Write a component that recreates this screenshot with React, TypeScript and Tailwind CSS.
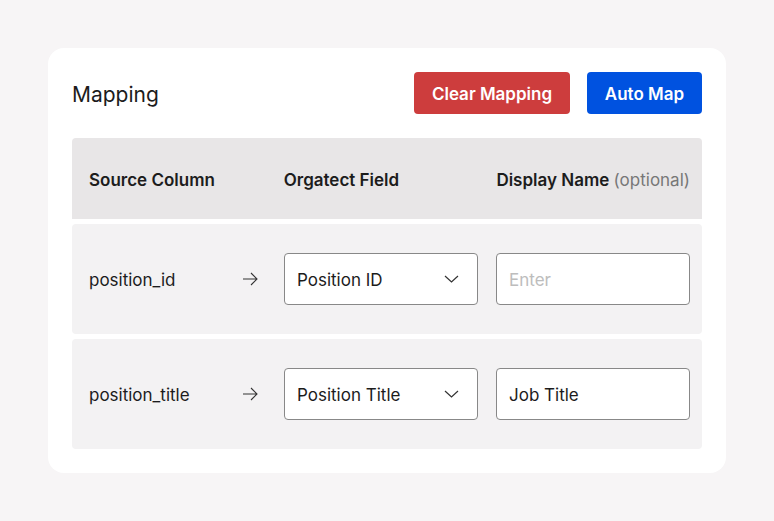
import React from "react";

const rows = [
  { source: "position_id", field: "Position ID", display: "" },
  { source: "position_title", field: "Position Title", display: "Job Title" },
];

function Arrow() {
  return (
    <svg width="16" height="14" viewBox="0 0 16 14" fill="none" stroke="#333" strokeWidth="1.1">
      <path d="M1 7h14M9 1l6 6-6 6" />
    </svg>
  );
}

function Chevron() {
  return (
    <svg width="15" height="8" viewBox="0 0 15 8" fill="none" stroke="#333" strokeWidth="1.2">
      <path d="M1 1l6.5 6L14 1" />
    </svg>
  );
}

export default function App() {
  return (
    <div
      className="min-h-[521px] w-full bg-[#f7f5f6] p-12 text-[#1c1c1c]"
      style={{ fontFamily: "Inter, 'Liberation Sans', sans-serif" }}
    >
      <div className="w-[678px] rounded-2xl bg-white p-6">
        {/* Header */}
        <div className="flex h-[42px] items-center">
          <h2 className="flex-1 pt-[3px] text-[21px] font-normal">Mapping</h2>
          <button className="h-[42px] w-[156px] rounded-[4px] bg-[#cd3d3d] pt-[3px] text-[17px] font-semibold text-white">
            Clear Mapping
          </button>
          <button className="ml-[17px] h-[42px] w-[115px] rounded-[4px] bg-[#0052e0] pt-[3px] text-[17px] font-semibold text-white">
            Auto Map
          </button>
        </div>

        {/* Table */}
        <div className="mt-6 flex flex-col gap-[5px]">
          <div className="flex h-[81px] items-center whitespace-nowrap rounded-t-[4px] bg-[#e8e6e7] pl-[17px] pr-3 pt-[4px] text-[17px] font-semibold">
            <div className="w-[195px]">Source Column</div>
            <div className="w-[213px]">Orgatect Field</div>
            <div>
              Display Name <span className="font-normal text-[#777]">(optional)</span>
            </div>
          </div>
          {rows.map((r) => (
            <div
              key={r.source}
              className="flex h-[110px] items-center rounded-[4px] bg-[#f3f2f3] pl-[17px] pr-3 text-[17px]"
            >
              <div className="w-[153px] pt-[4px]">{r.source}</div>
              <div className="flex w-[42px] items-center">
                <Arrow />
              </div>
              <div className="flex h-[52px] w-[194px] items-center justify-between rounded-[4px] border border-[#888] bg-white pl-3 pr-[18px]">
                <span className="pt-[4px]">{r.field}</span>
                <Chevron />
              </div>
              <div className="ml-[18px] flex h-[52px] w-[194px] items-center rounded-[4px] border border-[#888] bg-white px-3 pt-[4px]">
                {r.display ? (
                  <span>{r.display}</span>
                ) : (
                  <span className="text-[#bdbdbd]">Enter</span>
                )}
              </div>
            </div>
          ))}
        </div>
      </div>
    </div>
  );
}
